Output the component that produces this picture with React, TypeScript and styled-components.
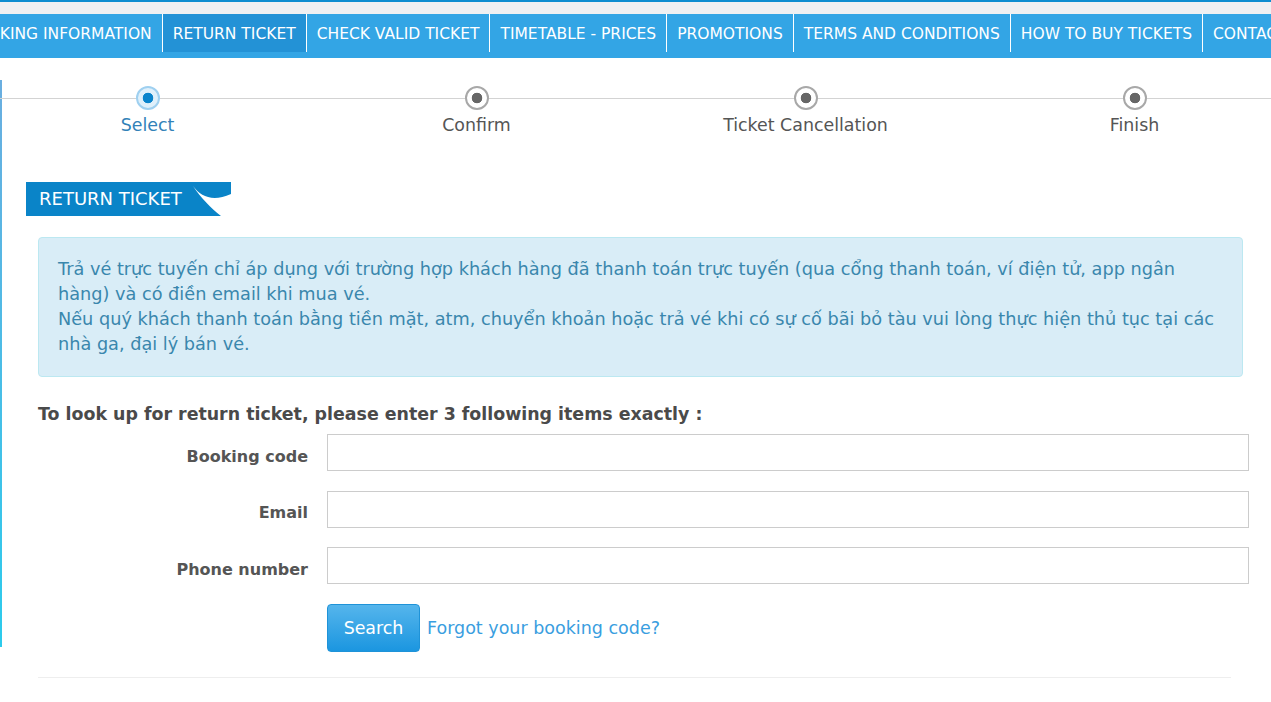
import React from 'react'
import styled, { createGlobalStyle } from 'styled-components'

const GlobalStyle = createGlobalStyle`
  html, body {
    margin: 0;
    padding: 0;
    background: #fff;
    font-family: "DejaVu Sans", Verdana, sans-serif;
    overflow: hidden;
  }
  * { box-sizing: border-box; }
`

const menu = [
  'BOOKING INFORMATION',
  'RETURN TICKET',
  'CHECK VALID TICKET',
  'TIMETABLE - PRICES',
  'PROMOTIONS',
  'TERMS AND CONDITIONS',
  'HOW TO BUY TICKETS',
  'CONTACT',
]

const steps = ['Select', 'Confirm', 'Ticket Cancellation', 'Finish']

const fields = ['Booking code', 'Email', 'Phone number']

function App() {
  return (
    <>
      <GlobalStyle />
      <TopStrip />
      <GrayBand />
      <NavBar>
        <NavList>
          {menu.map((item, i) => (
            <NavItem key={item} $active={i === 1}>{item}</NavItem>
          ))}
        </NavList>
      </NavBar>

      <Page>
        <Stepper>
          <StepGrid>
            {steps.map((s, i) => (
              <StepCol key={s}>
                <StepDot $active={i === 0} />
                <StepLabel $active={i === 0}>{s}</StepLabel>
              </StepCol>
            ))}
          </StepGrid>
        </Stepper>

        <Body>
          <TitleBar>
            <TitleText>RETURN TICKET</TitleText>
            {/* white swoosh on the right end of the heading tab */}
            <svg width="40" height="34" viewBox="0 0 40 34">
              <path d="M2,4 C10,15 22,20 40,12 L40,34 L30,34 C20,26 10,16 2,4 Z" fill="#fff" />
            </svg>
          </TitleBar>

          <Alert>
            Trả vé trực tuyến chỉ áp dụng với trường hợp khách hàng đã thanh toán trực tuyến (qua cổng thanh toán, ví điện tử, app ngân hàng) và có điền email khi mua vé.
            <br />
            Nếu quý khách thanh toán bằng tiền mặt, atm, chuyển khoản hoặc trả vé khi có sự cố bãi bỏ tàu vui lòng thực hiện thủ tục tại các nhà ga, đại lý bán vé.
          </Alert>

          <Lead>To look up for return ticket, please enter 3 following items exactly :</Lead>

          <Form>
            {fields.map(f => (
              <React.Fragment key={f}>
                <FieldLabel>{f}</FieldLabel>
                <Field type="text" />
              </React.Fragment>
            ))}
            <span />
            <Actions>
              <SearchButton type="button">Search</SearchButton>
              <ForgotLink href="#">Forgot your booking code?</ForgotLink>
            </Actions>
          </Form>

          <Divider />
        </Body>
      </Page>
    </>
  )
}

const TopStrip = styled.div`
  height: 2px;
  background: #0e8dd0;
`
const GrayBand = styled.div`
  height: 12px;
  background: #eff0f2;
`
const NavBar = styled.nav`
  height: 44px;
  background: #33a5e5;
  overflow: hidden;
`
const NavList = styled.div`
  display: flex;
  margin-left: -45px;
  white-space: nowrap;
`
const NavItem = styled.div<{ $active?: boolean }>`
  flex: none;
  height: 38px;
  line-height: 40px;
  padding: 0 10px;
  color: #fff;
  font-size: 15.5px;
  background: ${p => (p.$active ? '#2392d6' : 'transparent')};
  border-right: 1px solid #fff;
`
const Page = styled.main`
  position: relative;
  &::before {
    content: '';
    position: absolute;
    left: 0;
    top: 22px;
    width: 2px;
    height: 567px;
    background: linear-gradient(#6aaee0, #2ccbec);
  }
`
const Stepper = styled.div`
  position: relative;
  padding-top: 28px;
  overflow: hidden;
  &::before {
    content: '';
    position: absolute;
    left: 0;
    right: 0;
    top: 40px;
    height: 1px;
    background: #d3d3d3;
  }
`
const StepGrid = styled.div`
  display: grid;
  grid-template-columns: repeat(4, 329px);
  margin-left: -17px;
`
const StepCol = styled.div`
  display: flex;
  flex-direction: column;
  align-items: center;
`
const StepDot = styled.div<{ $active?: boolean }>`
  position: relative;
  width: 24px;
  height: 24px;
  border-radius: 50%;
  border: 2px solid ${p => (p.$active ? '#9fd0f0' : '#a8a8a8')};
  background: ${p =>
    p.$active
      ? 'radial-gradient(circle, #0a84cc 5px, #dff0fb 5.6px)'
      : 'radial-gradient(circle, #666 5px, #fff 5.6px)'};
`
const StepLabel = styled.div<{ $active?: boolean }>`
  margin-top: 5px;
  font-size: 17.4px;
  line-height: 20px;
  color: ${p => (p.$active ? '#3282b8' : '#555')};
`
const Body = styled.section`
  margin: 47px 22px 0 38px;
`
const TitleBar = styled.div`
  display: flex;
  align-items: stretch;
  width: 205px;
  height: 34px;
  margin-left: -12px;
  background: #0a84c8;
`
const TitleText = styled.div`
  flex: 1;
  padding-left: 13px;
  line-height: 34px;
  color: #fff;
  font-size: 18px;
  white-space: nowrap;
`
const Alert = styled.div`
  margin: 21px 6px 0 0;
  padding: 19px 19px;
  background: #d9edf7;
  border: 1px solid #bce8f1;
  border-radius: 4px;
  color: #3a87ad;
  font-size: 17.7px;
  line-height: 25px;
`
const Lead = styled.div`
  margin-top: 25px;
  font-size: 17.4px;
  font-weight: bold;
  line-height: 24px;
  color: #4a4a4a;
`
const Form = styled.form`
  display: grid;
  grid-template-columns: 270px 1fr;
  column-gap: 19px;
  row-gap: 19.5px;
  align-items: center;
  margin-top: 8px;
`
const FieldLabel = styled.label`
  padding-top: 8px;
  text-align: right;
  font-size: 16px;
  font-weight: bold;
  line-height: 20px;
  color: #555;
`
const Field = styled.input`
  height: 37px;
  width: 100%;
  border: 1px solid #ccc;
  border-radius: 0;
  padding: 6px 12px;
  font-size: 16px;
  outline: none;
`
const Actions = styled.div`
  display: flex;
  align-items: center;
  gap: 7px;
`
const SearchButton = styled.button`
  width: 93px;
  height: 48px;
  border: 1px solid #1f93d8;
  border-radius: 4px;
  background: linear-gradient(#55b5ec, #1b96e0);
  color: #fff;
  font-family: inherit;
  font-size: 17.4px;
  cursor: pointer;
`
const ForgotLink = styled.a`
  color: #3a9ee0;
  font-size: 17.5px;
  text-decoration: none;
`
const Divider = styled.hr`
  margin: 25px 18px 0 0;
  border: 0;
  border-top: 1px solid #eee;
`

export default App
